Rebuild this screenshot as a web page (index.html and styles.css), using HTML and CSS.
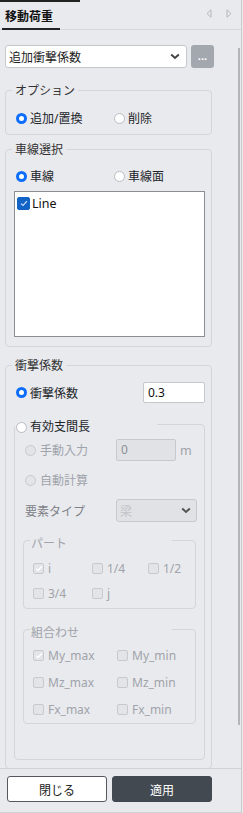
FILE: index.html
```html
<!DOCTYPE html>
<html lang="ja">
<head>
<meta charset="utf-8">
<title>移動荷重</title>
<link rel="stylesheet" href="styles.css">
</head>
<body>
<div class="window">
  <div class="topline"></div>
  <header class="tabbar">
    <div class="tab">移動荷重</div>
    <div class="arrows">
      <svg width="6" height="9" viewBox="0 0 6 9"><path d="M5 0.8 L1 4.5 L5 8.2 Z" fill="none" stroke="#b4b7bd" stroke-width="1"/></svg>
      <svg width="6" height="9" viewBox="0 0 6 9"><path d="M1 0.8 L5 4.5 L1 8.2 Z" fill="none" stroke="#b4b7bd" stroke-width="1"/></svg>
    </div>
  </header>
  <div class="main">
    <div class="content">
      <div class="toprow">
        <div class="select">
          <span>追加衝撃係数</span>
          <svg width="10" height="7" viewBox="0 0 10 7"><path d="M1.2 1.5 L5 5 L8.8 1.5" fill="none" stroke="#444" stroke-width="2"/></svg>
        </div>
        <div class="dots">...</div>
      </div>

      <fieldset class="fs fs-option">
        <legend>オプション</legend>
        <div class="radio-row">
          <label class="opt"><span class="radio on"></span>追加/置換</label>
          <label class="opt"><span class="radio"></span>削除</label>
        </div>
      </fieldset>

      <fieldset class="fs fs-lane">
        <legend>車線選択</legend>
        <div class="radio-row">
          <label class="opt"><span class="radio on"></span>車線</label>
          <label class="opt"><span class="radio"></span>車線面</label>
        </div>
        <div class="listbox">
          <label class="opt line"><span class="check on"><svg width="8" height="7" viewBox="0 0 8 7"><path d="M1 3.6 L3 5.5 L7 1.2" fill="none" stroke="#cfe0f7" stroke-width="1.2"/></svg></span>Line</label>
        </div>
      </fieldset>

      <fieldset class="fs fs-impact">
        <legend>衝撃係数</legend>
        <div class="impact-row">
          <label class="opt"><span class="radio on"></span>衝撃係数</label>
          <div class="input">0.3</div>
        </div>

        <fieldset class="inner">
          <legend><label class="opt"><span class="radio"></span>有効支間長</label></legend>
          <div class="row-manual">
            <label class="opt dis"><span class="radio dis"></span>手動入力</label>
            <div class="input disabled">0</div>
            <span class="unit">m</span>
          </div>
          <div class="row-auto">
            <label class="opt dis"><span class="radio dis"></span>自動計算</label>
          </div>
          <div class="row-type">
            <span class="type-label">要素タイプ</span>
            <div class="select disabled">
              <span>梁</span>
              <svg width="10" height="7" viewBox="0 0 10 7"><path d="M1.2 1.5 L5 5 L8.8 1.5" fill="none" stroke="#555" stroke-width="2"/></svg>
            </div>
          </div>

          <fieldset class="sub sub-part">
            <legend>パート</legend>
            <div class="grid-part">
              <label class="opt dis"><span class="check dis"><svg width="8" height="7" viewBox="0 0 8 7"><path d="M1 3.6 L3 5.5 L7 1.2" fill="none" stroke="#ffffff" stroke-width="1.3"/></svg></span>i</label>
              <label class="opt dis"><span class="check dis"></span>1/4</label>
              <label class="opt dis"><span class="check dis"></span>1/2</label>
              <label class="opt dis"><span class="check dis"></span>3/4</label>
              <label class="opt dis"><span class="check dis"></span>j</label>
            </div>
          </fieldset>

          <fieldset class="sub sub-comb">
            <legend>組合わせ</legend>
            <div class="grid-comb">
              <label class="opt dis"><span class="check dis"><svg width="8" height="7" viewBox="0 0 8 7"><path d="M1 3.6 L3 5.5 L7 1.2" fill="none" stroke="#ffffff" stroke-width="1.3"/></svg></span>My_max</label>
              <label class="opt dis"><span class="check dis"></span>My_min</label>
              <label class="opt dis"><span class="check dis"></span>Mz_max</label>
              <label class="opt dis"><span class="check dis"></span>Mz_min</label>
              <label class="opt dis"><span class="check dis"></span>Fx_max</label>
              <label class="opt dis"><span class="check dis"></span>Fx_min</label>
            </div>
          </fieldset>
        </fieldset>
      </fieldset>
    </div>
    <div class="scrollbar"><div class="thumb"></div></div>
  </div>
  <footer class="footer">
    <button class="btn close">閉じる</button>
    <button class="btn apply">適用</button>
  </footer>
</div>
</body>
</html>
```

FILE: styles.css
```css
* { box-sizing: border-box; }
html, body { margin: 0; padding: 0; }
body {
  background: #e9eaee;
  font-family: "Noto Sans", "Noto Sans CJK JP", sans-serif;
  font-size: 12px;
  color: #212529;
}
.window {
  width: 242px;
  height: 813px;
  border-right: 1px solid #c9cbcf;
  display: flex;
  flex-direction: column;
}
.topline { width: 80px; height: 2px; background: #222; flex: none; }
.tabbar {
  height: 28px;
  flex: none;
  display: flex;
  align-items: stretch;
  justify-content: space-between;
  border-bottom: 1px solid #d6d8dc;
}
.tab {
  margin-left: 2px;
  padding: 0 7px 0 3px;
  height: 28px;
  line-height: 27px;
  font-weight: bold;
  font-family: "Noto Sans CJK JP", sans-serif;
  color: #111;
  border-bottom: 2px solid #222;
}
.arrows { display: flex; align-items: center; gap: 14px; padding-right: 9px; padding-bottom: 4px; }

.main { flex: 1; display: flex; min-height: 0; }
.content { width: 237px; padding: 15px 0 0 5px; }
.scrollbar { width: 4px; padding-top: 18px; }
.thumb { width: 2px; height: 677px; background: #b3b5b9; margin-left: 1px; }

.toprow { display: flex; gap: 4px; width: 209px; }
.select {
  width: 182px;
  height: 23px;
  background: #fff;
  border: 1px solid #c4c7cc;
  border-radius: 3px;
  display: flex;
  align-items: center;
  justify-content: space-between;
  padding: 0 6px 0 3px;
  font-family: "Noto Sans CJK JP", sans-serif;
  color: #222;
}
.dots {
  width: 23px;
  height: 23px;
  background: #a3a7ae;
  border-radius: 3px;
  color: #fff;
  text-align: center;
  line-height: 22px;
  font-size: 11px;
  font-weight: bold;
}

.fs {
  width: 207px;
  border: 1px solid #d3d5da;
  border-radius: 4px;
  margin: 0;
  padding: 0 6px 8px 8px;
  min-width: 0;
}
legend {
  padding: 0 3px;
  margin-left: -2px;
  line-height: 16px;
  font-family: "Noto Sans CJK JP", sans-serif;
  color: #333;
}
.fs-option { margin-top: 14px; padding-bottom: 6px; }
.fs-lane { margin-top: 6px; padding-bottom: 9px; }
.fs-impact { margin-top: 10px; padding-bottom: 8px; }

.opt {
  display: flex;
  align-items: center;
  gap: 3px;
  font-family: "Noto Sans", "Noto Sans CJK JP", sans-serif;
  white-space: nowrap;
}
.opt.dis { color: #a0a3aa; gap: 4px; }

.radio-row { display: grid; grid-template-columns: 98px auto; height: 20px; margin-top: 10px; padding-left: 2px; }
.fs-lane .radio-row { margin-top: 9px; }

.radio {
  width: 11px; height: 11px;
  border-radius: 50%;
  background: #fff;
  border: 1px solid #b9bcc2;
  flex: none;
}
.radio.on { background: #fff; border: 3px solid #0d6efd; }
.radio.dis { background: #e3e4e8; border-color: #c6c9ce; }

.check {
  width: 11px; height: 11px;
  border-radius: 2px;
  background: #e3e4e8;
  border: 1px solid #c6c9ce;
  flex: none;
  display: flex; align-items: center; justify-content: center;
}
.check.on { width: 13px; height: 13px; background: #1263c6; border-color: #1263c6; }

.listbox {
  margin-top: 5px;
  width: 191px;
  height: 146px;
  background: #fff;
  border: 1px solid #8a8d93;
  padding: 3px 2px;
}
.line { gap: 2px; font-size: 12.5px; color: #111; }

.impact-row { display: flex; justify-content: space-between; align-items: center; margin-top: 9px; height: 21px; padding-left: 2px; }
.input {
  width: 62px;
  height: 21px;
  background: #fff;
  border: 1px solid #c4c7cc;
  border-radius: 2px;
  padding-left: 4px;
  line-height: 19px;
  color: #111;
}
.input.disabled { width: 60px; height: 22px; background: #e1e2e6; color: #8d9097; border-color: #c6c9ce; }

.inner {
  margin: 8px 0 0 0;
  width: 191px;
  border: 1px solid #d3d5da;
  border-radius: 4px;
  padding: 0 7px 35px 10px;
  min-width: 0;
}
.inner legend { width: 142px; margin-left: -10px; padding: 6px 0 0 1px; }
.inner legend .opt { height: 20px; color: #212529; }

.row-manual { display: flex; align-items: center; margin-top: 2px; height: 22px; }
.row-manual .opt { width: 91px; }
.unit { margin-left: 4px; color: #a0a3aa; font-size: 12.5px; }
.row-auto { margin-top: 9px; height: 20px; display: flex; }
.row-type { margin-top: 9px; display: flex; align-items: center; height: 23px; }
.type-label { width: 91px; color: #7e8188; font-family: "Noto Sans CJK JP", sans-serif; }
.select.disabled { width: 81px; background: #e1e2e6; border-color: #c6c9ce; color: #c1c3c8; padding-right: 5px; }

.sub {
  width: 173px;
  margin: 0 0 0 -2px;
  border: 1px solid #d3d5da;
  border-radius: 4px;
  padding: 0 9px 5px 9px;
  min-width: 0;
}
.sub legend { margin-left: -3px; color: #a0a3aa; }
.sub-part { margin-top: 7px; }
.sub-comb { margin-top: 9px; padding-bottom: 4px; }
.grid-part { display: grid; grid-template-columns: 59px 56px auto; grid-auto-rows: 20px; row-gap: 5px; margin-top: 7px; }
.grid-comb { display: grid; grid-template-columns: 84px auto; grid-auto-rows: 20px; row-gap: 7px; margin-top: 5px; }

.footer {
  height: 45px;
  flex: none;
  border-top: 1px solid #d0d2d6;
  border-bottom: 1px solid #d0d2d6;
  padding: 7px 0 0 7px;
  display: flex;
  gap: 5px;
  align-items: flex-start;
}
.btn {
  width: 100px;
  height: 26px;
  border-radius: 3px;
  font-family: "Noto Sans CJK JP", sans-serif;
  font-size: 12px;
  padding: 0;
}
.close { background: #fff; border: 1px solid #55595f; color: #222; }
.apply { background: #434950; border: 1px solid #434950; color: #fff; }
```
